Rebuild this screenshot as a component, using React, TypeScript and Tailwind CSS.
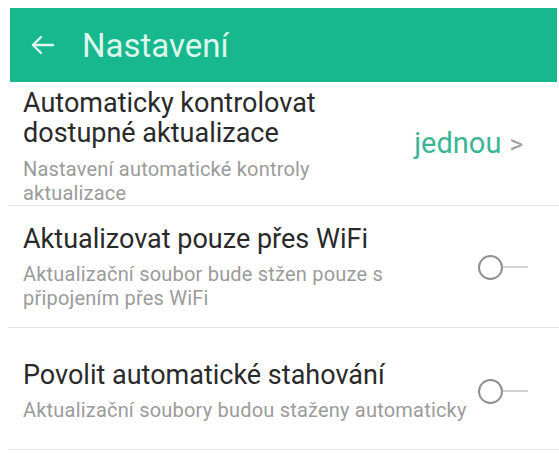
import React from 'react';

const Toggle = () => (
    <div className="flex items-center">
        <div className="w-[25px] h-[25px] rounded-full border-2 border-[#8f8f8f]" />
        <div className="w-[25px] h-[2px] bg-[#d2d2d2]" />
    </div>
);

export default function App() {
    return (
        <div className="w-[559px] h-[453px] bg-white overflow-hidden font-['Roboto',sans-serif]">
            {/* Header */}
            <div className="mt-[8px] ml-[10px] mr-[2px] h-[74px] bg-[#17b88d] flex items-center">
                <svg width="24" height="24" viewBox="0 0 24 24" className="ml-[21px]" fill="none" stroke="#dff7ee" strokeWidth="2.4" strokeLinecap="round" strokeLinejoin="round">
                    <path d="M22 12H2" />
                    <path d="M10 4l-8 8 8 8" />
                </svg>
                <h1 className="ml-[27px] text-[33px] leading-none text-[#dcf6ec]">Nastavení</h1>
            </div>

            {/* Row 1 */}
            <div className="ml-[8px] border-b border-[#e6e6e6] flex items-center pt-[6px]">
                <div className="flex-1 pl-[15px]">
                    <div className="text-[27px] leading-[30px] text-[#2a2a2a]">
                        Automaticky kontrolovat<br />dostupné aktualizace
                    </div>
                    <div className="mt-[10px] text-[20px] leading-[23.5px] tracking-[0.2px] text-[#9b9b9b]">
                        Nastavení automatické kontroly<br />aktualizace
                    </div>
                </div>
                <div className="flex items-center pr-[36px] mb-[5px]">
                    <span className="text-[29px] text-[#3cb596]">jednou</span>
                    <span className="ml-[8px] text-[26px] text-[#a0a0a0]">&gt;</span>
                </div>
            </div>

            {/* Row 2 */}
            <div className="ml-[8px] border-b border-[#e6e6e6] flex items-center pt-[18px] pb-[17px]">
                <div className="flex-1 pl-[15px]">
                    <div className="text-[27px] leading-[30px] text-[#2a2a2a]">Aktualizovat pouze přes WiFi</div>
                    <div className="mt-[9px] text-[20px] leading-[23.5px] tracking-[0.2px] text-[#9b9b9b]">
                        Aktualizační soubor bude stžen pouze s<br />připojením přes WiFi
                    </div>
                </div>
                <div className="pr-[31px]">
                    <Toggle />
                </div>
            </div>

            {/* Row 3 */}
            <div className="ml-[8px] border-b border-[#e6e6e6] flex items-center pt-[32px] pb-[26px]">
                <div className="flex-1 pl-[15px]">
                    <div className="text-[27px] leading-[30px] text-[#2a2a2a]">Povolit automatické stahování</div>
                    <div className="mt-[9px] text-[20px] leading-[23.5px] tracking-[0.2px] text-[#9b9b9b]">
                        Aktualizační soubory budou staženy automaticky
                    </div>
                </div>
                <div className="pr-[31px]">
                    <Toggle />
                </div>
            </div>
        </div>
    );
}
